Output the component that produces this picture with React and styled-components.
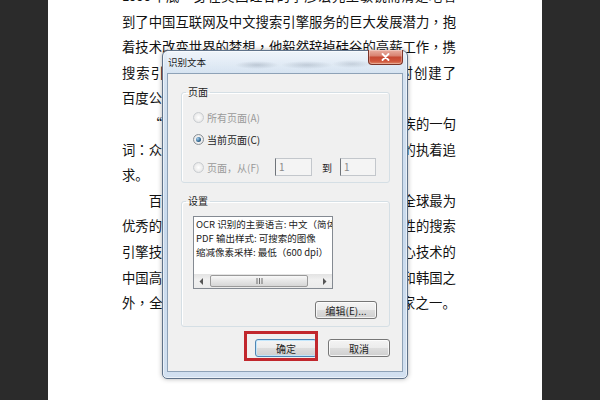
import React from 'react';
import styled, { createGlobalStyle } from 'styled-components';

const GlobalStyle = createGlobalStyle`
  html, body { margin: 0; padding: 0; background: #2b2b2b; overflow: hidden; }
  #root { width: 600px; height: 400px; }
`;

const Screen = styled.div`
  display: flex;
  width: 600px;
  height: 400px;
  overflow: hidden;
  background: #2b2b2b;
`;

const DarkSide = styled.div`
  flex: 0 0 ${(p) => p.$w}px;
  background: #2b2b2b;
`;

const Page = styled.div`
  position: relative;
  flex: 0 0 494px;
  background: #ffffff;
  overflow: hidden;
`;

const Article = styled.div`
  margin: -17px 0 0 74px;
  width: 334px;
  font-family: "Noto Sans CJK SC", "Noto Sans", sans-serif;
  font-size: 13.35px;
  line-height: 25.6px;
  color: #111;
`;

const Line = styled.div`
  height: 25.6px;
  overflow: hidden;
  text-indent: ${(p) => (p.$indent ? '2em' : '0')};
  text-align: ${(p) => (p.$short ? 'left' : 'justify')};
  text-align-last: ${(p) => (p.$short ? 'left' : 'justify')};
`;

const Punct = styled.span`
  font-family: "Noto Sans CJK TC", "Noto Sans CJK SC", sans-serif;
`;

const Dialog = styled.div`
  position: absolute;
  left: 114px;
  top: 50px;
  width: 246px;
  height: 329px;
  box-sizing: border-box;
  border: 1px solid #5f7289;
  border-radius: 6px 6px 5px 5px;
  background: linear-gradient(180deg, #e6eef8 0px, #d6e3f1 22px, #c9daed 55%, #d2e0f0 100%);
  box-shadow: 0 0 5px rgba(0, 0, 0, 0.3), inset 0 0 0 1px rgba(255, 255, 255, 0.55);
  display: flex;
  flex-direction: column;
  padding: 0 4px 6px 4px;
  font-family: "Noto Sans CJK SC", "Noto Sans", sans-serif;
`;

const TitleBar = styled.div`
  height: 22px;
  flex: 0 0 22px;
  display: flex;
  justify-content: space-between;
  align-items: flex-start;
  background:
    radial-gradient(ellipse 22px 4px at 90px 14px, rgba(95, 110, 130, 0.28), transparent),
    radial-gradient(ellipse 26px 4px at 140px 14px, rgba(95, 110, 130, 0.25), transparent),
    radial-gradient(ellipse 20px 4px at 185px 13px, rgba(95, 110, 130, 0.22), transparent),
    linear-gradient(180deg, rgba(255, 255, 255, 0.35), rgba(255, 255, 255, 0));
`;

const Title = styled.span`
  margin: 5px 0 0 1px;
  font-size: 9.5px;
  line-height: 12px;
  color: #1b1b1b;
`;

const CloseButton = styled.div`
  width: 35px;
  height: 15px;
  margin-top: -1px;
  box-sizing: border-box;
  border: 1px solid #7c3327;
  border-top: none;
  border-radius: 0 0 4px 4px;
  background: linear-gradient(180deg, #eab0a2 0%, #d98574 40%, #c64a34 52%, #d0563c 80%, #e18a6a 100%);
  display: flex;
  align-items: center;
  justify-content: center;
  box-shadow: inset 0 0 0 1px rgba(255, 255, 255, 0.3);
`;

const Client = styled.div`
  height: 299px;
  box-sizing: border-box;
  border: 1px solid #8ea2b7;
  background: #f0f0f0;
  display: flex;
  flex-direction: column;
  padding: 12px 12px 0 13px;
`;

const Group = styled.fieldset`
  margin: ${(p) => (p.$first ? '0' : '12px 0 0 0')};
  padding: ${(p) => p.$pad};
  border: 1px solid #d5dfe5;
  border-radius: 3px;
  box-shadow: inset 1px 1px 0 #fff;
  min-width: 0;
`;

const Legend = styled.legend`
  margin-left: -7px;
  padding: 0 2px;
  font-size: 10px;
  line-height: 12px;
  color: #1e1e1e;
`;

const GroupBody = styled.div`
  display: flex;
  flex-direction: column;
`;

const OptionRow = styled.div`
  display: flex;
  align-items: center;
  height: ${(p) => (p.$tall ? 18 : 22)}px;
  margin-top: ${(p) => (p.$tall ? 8 : 0)}px;
`;

const OptionCell = styled.label`
  display: flex;
  align-items: center;
  gap: 3px;
  width: ${(p) => (p.$w ? `${p.$w}px` : 'auto')};
  font-size: 10px;
  color: ${(p) => (p.$disabled ? '#9a9a9a' : '#1e1e1e')};
`;

const Radio = styled.span`
  flex: 0 0 11px;
  width: 11px;
  height: 11px;
  box-sizing: border-box;
  border-radius: 50%;
  border: 1px solid ${(p) => (p.$disabled ? '#c9cdd1' : '#8a9096')};
  background: radial-gradient(circle at 50% 50%, #ffffff 0, #ececec 60%, #d9d9d9 100%);
  display: flex;
  align-items: center;
  justify-content: center;
  &::after {
    content: '';
    display: ${(p) => (p.$checked ? 'block' : 'none')};
    width: 5px;
    height: 5px;
    border-radius: 50%;
    background: radial-gradient(circle at 35% 35%, #a9d1f0, #2f6690 60%, #1c3a55);
  }
`;

const NumBox = styled.div`
  width: ${(p) => p.$w}px;
  height: 18px;
  box-sizing: border-box;
  border: 1px solid #c3c7cc;
  border-left-color: #6f747a;
  background: #f4f4f4;
  font-size: 10px;
  line-height: 16px;
  padding-left: 3px;
  color: #8a8a8a;
`;

const ToLabel = styled.span`
  margin: 0 8px 0 10px;
  font-size: 10px;
  color: #1e1e1e;
`;

const ListBox = styled.div`
  width: 140px;
  height: 73px;
  box-sizing: border-box;
  border: 1px solid #848a92;
  background: #ffffff;
  display: flex;
  flex-direction: column;
`;

const ListText = styled.div`
  flex: 1;
  overflow: hidden;
  padding: 0 0 0 2px;
`;

const ListLine = styled.div`
  white-space: nowrap;
  font-size: 9.5px;
  line-height: 14px;
  color: #222;
`;

const HScroll = styled.div`
  flex: 0 0 14px;
  display: flex;
  background: linear-gradient(180deg, #e3e3e3, #f0f0f0 40%, #ebebeb);
`;

const ScrollArrow = styled.div`
  flex: 0 0 14px;
  display: flex;
  align-items: center;
  justify-content: center;
`;

const Track = styled.div`
  flex: 1;
  display: flex;
  align-items: stretch;
  padding: 1px 0;
`;

const Thumb = styled.div`
  width: 98px;
  margin-left: 2px;
  box-sizing: border-box;
  border: 1px solid #9a9a9a;
  border-radius: 2px;
  background: linear-gradient(180deg, #f8f8f8, #e6e6e6 50%, #d6d6d6);
  display: flex;
  align-items: center;
  justify-content: center;
`;

const Button = styled.div`
  width: 62px;
  height: 18px;
  box-sizing: border-box;
  border: 1px solid ${(p) => (p.$default ? '#4f86b4' : '#767676')};
  border-radius: 3px;
  background: linear-gradient(180deg, #f4f4f4 0%, #ececec 48%, #dddddd 52%, #cfcfcf 100%);
  box-shadow: inset 0 0 0 1px ${(p) => (p.$default ? 'rgba(190, 230, 253, 0.9)' : 'rgba(255, 255, 255, 0.75)')};
  display: flex;
  align-items: center;
  justify-content: center;
  font-size: 10px;
  color: #1e1e1e;
  align-self: ${(p) => (p.$end ? 'flex-end' : 'auto')};
  margin-top: ${(p) => p.$mt || 0}px;
`;

const ButtonRow = styled.div`
  display: flex;
  justify-content: flex-end;
  gap: 11px;
  margin-top: 12px;
`;

const HighlightWrap = styled.div`
  position: relative;
`;

const Highlight = styled.div`
  position: absolute;
  left: -11px;
  top: -8px;
  width: 74px;
  height: 30px;
  box-sizing: border-box;
  border: 3px solid #c1272d;
  pointer-events: none;
`;

const lines = [
  { t: '1999年底，身在美国硅谷的李彦宏先生敏锐而清楚地看' },
  { t: '到了中国互联网及中文搜索引擎服务的巨大发展潜力，抱' },
  { t: '着技术改变世界的梦想，他毅然辞掉硅谷的高薪工作，携' },
  { t: '搜索引擎专利技术，于2000年1月1日在中关村创建了' },
  { t: '百度公司。', short: true },
  { t: '“百度”二字，源自八百年前南宋词人辛弃疾的一句', indent: true },
  { t: '词：众里寻他千百度。这句话描述了词人对理想的执着追' },
  { t: '求。', short: true },
  { t: '百度拥有数千名研发工程师，这是中国乃至全球最为', indent: true },
  { t: '优秀的技术团队，他们掌握着世界上最具有革命性的搜索' },
  { t: '引擎技术，使百度成为中国掌握世界尖端科学核心技术的' },
  { t: '中国高科技企业，也使中国成为了美国、俄罗斯和韩国之' },
  { t: '外，全球仅有的4个拥有搜索引擎核心技术的国家之一。' },
];

const renderText = (text) =>
  text.split(/([，：])/).map((part, i) =>
    part === '，' || part === '：' ? <Punct key={i}>{part}</Punct> : part
  );

const CloseGlyph = () => (
  <svg width="9" height="8" viewBox="0 0 9 8">
    <path d="M1.5 1 L7.5 7 M7.5 1 L1.5 7" stroke="#ffffff" strokeWidth="1.8" strokeLinecap="round" />
  </svg>
);

const ArrowLeft = () => (
  <svg width="4" height="7" viewBox="0 0 4 7">
    <polygon points="4,0 4,7 0.5,3.5" fill="#555" />
  </svg>
);

const ArrowRight = () => (
  <svg width="4" height="7" viewBox="0 0 4 7">
    <polygon points="0,0 0,7 3.5,3.5" fill="#555" />
  </svg>
);

const Grip = () => (
  <svg width="7" height="6" viewBox="0 0 7 6">
    <path d="M1 0 V6 M3.5 0 V6 M6 0 V6" stroke="#6f6f6f" strokeWidth="1" />
  </svg>
);

export default function App() {
  return (
    <>
      <GlobalStyle />
      <Screen>
        <DarkSide $w={48} />
        <Page>
          <Article>
            {lines.map((l, i) => (
              <Line key={i} $indent={l.indent} $short={l.short}>
                {renderText(l.t)}
              </Line>
            ))}
          </Article>

          <Dialog>
            <TitleBar>
              <Title>识别文本</Title>
              <CloseButton>
                <CloseGlyph />
              </CloseButton>
            </TitleBar>
            <Client>
              <Group $first $pad="8px 12px 6px 11px">
                <Legend>页面</Legend>
                <GroupBody>
                  <OptionRow>
                    <OptionCell $disabled>
                      <Radio $disabled />
                      所有页面(A)
                    </OptionCell>
                  </OptionRow>
                  <OptionRow>
                    <OptionCell>
                      <Radio $checked />
                      当前页面(C)
                    </OptionCell>
                  </OptionRow>
                  <OptionRow $tall>
                    <OptionCell $disabled $w={82}>
                      <Radio $disabled />
                      页面，从(F)
                    </OptionCell>
                    <NumBox $w={37}>1</NumBox>
                    <ToLabel>到</ToLabel>
                    <NumBox $w={36}>1</NumBox>
                  </OptionRow>
                </GroupBody>
              </Group>

              <Group $pad="9px 12px 7px 11px">
                <Legend>设置</Legend>
                <GroupBody>
                  <ListBox>
                    <ListText>
                      <ListLine>OCR 识别的主要语言: 中文（简体）</ListLine>
                      <ListLine>PDF 输出样式: 可搜索的图像</ListLine>
                      <ListLine>缩减像素采样: 最低（600 dpi）</ListLine>
                    </ListText>
                    <HScroll>
                      <ScrollArrow>
                        <ArrowLeft />
                      </ScrollArrow>
                      <Track>
                        <Thumb>
                          <Grip />
                        </Thumb>
                      </Track>
                      <ScrollArrow>
                        <ArrowRight />
                      </ScrollArrow>
                    </HScroll>
                  </ListBox>
                  <Button $end $mt={12}>编辑(E)...</Button>
                </GroupBody>
              </Group>

              <ButtonRow>
                <HighlightWrap>
                  <Button $default>确定</Button>
                  <Highlight />
                </HighlightWrap>
                <Button>取消</Button>
              </ButtonRow>
            </Client>
          </Dialog>
        </Page>
        <DarkSide $w={58} />
      </Screen>
    </>
  );
}
